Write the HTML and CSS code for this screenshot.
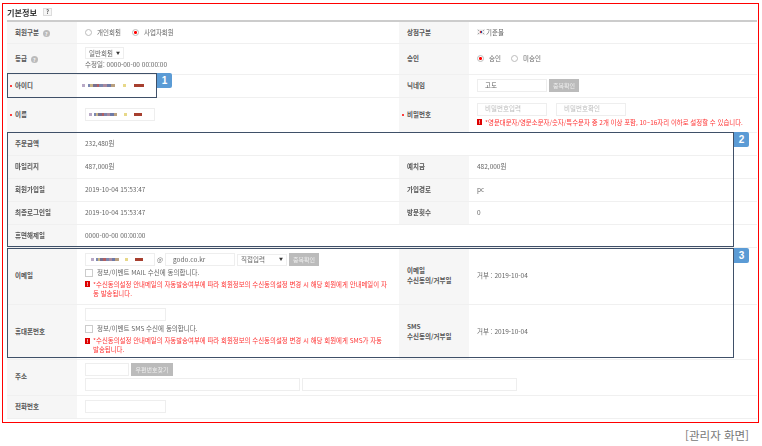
FILE: index.html
```html
<!DOCTYPE html>
<html lang="ko">
<head>
<meta charset="utf-8">
<title>기본정보</title>
<link rel="stylesheet" href="styles.css">
</head>
<body>
<main class="frame">
  <header class="title-bar"><h1 class="title">기본정보</h1><span class="help-box">?</span></header>
  <table class="form">
    <colgroup><col class="c-label"><col class="c-value"><col class="c-label"><col class="c-value2"></colgroup>
    <tr class="h22">
      <th>회원구분 <i class="q">?</i></th>
      <td><div class="line"><i class="radio"></i><span class="opt">개인회원</span><i class="radio on gap"></i><span class="opt">사업자회원</span></div></td>
      <th>상점구분</th>
      <td><div class="line"><svg class="flag" viewBox="0 0 9 7"><rect width="9" height="7" fill="#f4f4f4"/><path d="M4.5 2a1.5 1.5 0 0 1 0 3z" fill="#2a4a9a"/><path d="M4.5 2a1.5 1.5 0 0 0 0 3z" fill="#d8232a"/><path d="M1 1l1 1M1 6l1-1M8 1L7 2M8 6L7 5" stroke="#333" stroke-width=".8"/></svg><span class="val">기준몰</span></div></td>
    </tr>
    <tr class="h31">
      <th>등급 <i class="q">?</i></th>
      <td><div class="stack"><span class="select s-grade">일반회원<b class="caret">▼</b></span><span class="val">수정일: 0000-00-00 00:00:00</span></div></td>
      <th>승인</th>
      <td><div class="line"><i class="radio on"></i><span class="opt">승인</span><i class="radio gap2"></i><span class="opt">미승인</span></div></td>
    </tr>
    <tr class="h23">
      <th class="req">아이디</th>
      <td><span class="mosaic m-id"></span></td>
      <th>닉네임</th>
      <td><div class="line"><span class="input w70 txt">고도</span><span class="btn w30">중복확인</span></div></td>
    </tr>
    <tr class="h35">
      <th class="req">이름</th>
      <td><span class="input w70 boxed"><span class="mosaic m-name"></span></span></td>
      <th class="req">비밀번호</th>
      <td><div class="stack s5"><div class="line"><span class="input w70 ph">비밀번호입력</span><span class="input w70 ph gap3">비밀번호확인</span></div><p class="note"><i class="bang">!</i>*영문대문자/영문소문자/숫자/특수문자 중 2개 이상 포함, 10~16자리 이하로 설정할 수 있습니다.</p></div></td>
    </tr>
    <tr class="h23"><th>주문금액</th><td colspan="3" class="val">232,480원</td></tr>
    <tr class="h23"><th>마일리지</th><td class="val">487,000원</td><th>예치금</th><td class="val">482,000원</td></tr>
    <tr class="h23"><th>회원가입일</th><td class="val">2019-10-04 15:53:47</td><th>가입경로</th><td class="val">pc</td></tr>
    <tr class="h23"><th>최종로그인일</th><td class="val">2019-10-04 15:53:47</td><th>방문횟수</th><td class="val">0</td></tr>
    <tr class="h23"><th>휴면해제일</th><td colspan="3" class="val">0000-00-00 00:00:00</td></tr>
    <tr class="h57">
      <th>이메일</th>
      <td><div class="stack s5">
        <div class="line"><span class="input w70 boxed"><span class="mosaic m-mail"></span></span><span class="at">@</span><span class="input w70 txt">godo.co.kr</span><span class="select s-mail">직접입력<b class="caret">▼</b></span><span class="btn w30">중복확인</span></div>
        <label class="check"><i class="box"></i>정보/이벤트 MAIL 수신에 동의합니다.</label>
        <p class="note"><i class="bang">!</i>*수신동의설정 안내메일의 자동발송여부에 따라 회원정보의 수신동의설정 변경 시 해당 회원에게 안내메일이 자<br>동 발송됩니다.</p>
      </div></td>
      <th>이메일<br>수신동의/거부일</th>
      <td class="val">거부 : 2019-10-04</td>
    </tr>
    <tr class="h55">
      <th>휴대폰번호</th>
      <td><div class="stack s3">
        <span class="input w80"></span>
        <label class="check"><i class="box"></i>정보/이벤트 SMS 수신에 동의합니다.</label>
        <p class="note note-up"><i class="bang">!</i>*수신동의설정 안내메일의 자동발송여부에 따라 회원정보의 수신동의설정 변경 시 해당 회원에게 SMS가 자동<br>발송됩니다.</p>
      </div></td>
      <th>SMS<br>수신동의/거부일</th>
      <td class="val">거부 : 2019-10-04</td>
    </tr>
    <tr class="h36">
      <th>주소</th>
      <td colspan="3"><div class="stack s2">
        <div class="line"><span class="input w43"></span><span class="btn w41">우편번호찾기</span></div>
        <div class="line"><span class="input w214"></span><span class="input w215"></span></div>
      </div></td>
    </tr>
    <tr class="h23"><th>전화번호</th><td colspan="3"><span class="input w80"></span></td></tr>
  </table>

  <div class="mark mark-1"></div><span class="badge badge-1">1</span>
  <div class="mark mark-2"></div><span class="badge badge-2">2</span>
  <div class="mark mark-3"></div><span class="badge badge-3">3</span>
</main>
<p class="caption">[관리자 화면]</p>
</body>
</html>
```
FILE: styles.css
```css
* { box-sizing: border-box; }
html, body { margin: 0; padding: 0; background: #fff; }
body {
  width: 762px;
  height: 446px;
  overflow: hidden;
  font-family: "Noto Sans CJK KR", "Noto Sans", sans-serif;
  font-size: 6.5px;
  color: #555;
}
.frame {
  position: relative;
  width: 757px;
  height: 420px;
  margin: 3px 0 0 2px;
  padding: 0 1px 0 4px;
  border: 1px solid #f00;
}
.title-bar { display: flex; align-items: center; gap: 6px; height: 16px; filter: blur(.25px); }
.title { margin: 0; font-size: 8.2px; font-weight: 700; color: #333; line-height: 12px; }
.help-box {
  width: 9px; height: 8px; border: 1px solid #ddd; background: #f6f6f6;
  font-size: 6px; line-height: 6px; font-weight: 700; text-align: center; color: #555;
}
.form {
  width: 750px;
  table-layout: fixed;
  border-collapse: collapse;
  border-top: 2px solid #ccc;
  filter: blur(.25px);
}
.c-label { width: 70px; }
.c-value { width: 322px; }
.c-value2 { width: 288px; }
.form tr { border-bottom: 1px solid #f0f0f0; }
.h22 { height: 22px; } .h23 { height: 23px; } .h31 { height: 31px; }
.h35 { height: 35px; } .h36 { height: 36px; } .h55 { height: 55px; } .h57 { height: 57px; }
.form th, .form td { padding: 0; vertical-align: middle; text-align: left; line-height: 9.5px; }
.form th {
  position: relative;
  padding-left: 8px;
  background: #f6f6f6;
  font-weight: 700;
  color: #555;
}
.form td { padding-left: 8px; }
.val { color: #666; }
.req::before {
  content: "";
  position: absolute;
  left: 3px; top: 50%;
  width: 2px; height: 2px;
  margin-top: -1px;
  border-radius: 50%;
  background: #f00;
}
.line { display: flex; align-items: center; }
.stack { display: flex; flex-direction: column; align-items: flex-start; gap: 1px; }
.s2 { gap: 2px; }
.s3 { gap: 3px; padding-bottom: 1px; }
.s5 { gap: 2px; }
.note-up { margin-top: -1px; }
.q {
  display: inline-block; width: 7px; height: 7px; margin-left: 2px; border-radius: 50%;
  background: #bbb; color: #fff; font-size: 5px; line-height: 7px; text-align: center; font-style: normal; vertical-align: -1px;
}
.radio {
  width: 7px; height: 7px; border: 1px solid #bbb; border-radius: 50%; background: #fff;
  margin-right: 5px; flex: none;
}
.radio.on { background: radial-gradient(circle, #f00 0 1.2px, #fff 1.8px); }
.gap { margin-left: 11px; }
.gap2 { margin-left: 10px; }
.opt { color: #666; }
.flag { width: 8px; height: 6px; margin-right: 1px; }
.input {
  display: flex; align-items: center;
  height: 13px; border: 1px solid #eee; background: #fff; flex: none;
}
.w43 { width: 44px; } .w70 { width: 70px; } .w80 { width: 81px; }
.w214 { width: 215px; } .w215 { width: 215px; margin-left: 2px; }
.txt { padding-left: 7px; color: #666; }
.ph { padding-left: 7px; color: #bbb; }
.boxed { padding-left: 2px; }
.gap3 { margin-left: 9px; }
.btn {
  display: flex; align-items: center; justify-content: center;
  height: 13px; margin-left: 2px; background: #bbb; color: #eee; font-size: 6px; flex: none;
}
.w30 { width: 30px; } .w41 { width: 42px; }
.select {
  display: flex; align-items: center; justify-content: space-between;
  height: 12px; padding: 0 3px; border: 1px solid #eee; background: #fff; color: #666;
}
.s-grade { width: 39px; }
.s-mail { width: 50px; margin-left: 2px; }
.caret { font-size: 4px; color: #333; font-weight: 400; }
.at { width: 10px; text-align: center; color: #777; }
.check { display: flex; align-items: center; color: #666; }
.box { width: 8px; height: 8px; border: 1px solid #ccc; background: #fff; margin-right: 4px; flex: none; }
.note {
  position: relative;
  margin: 0; padding-left: 8px;
  font-size: 6.42px; line-height: 9px; color: #f33; white-space: nowrap;
}
.bang {
  position: absolute; left: 0; top: 1.5px;
  width: 5px; height: 6px; background: #d00; color: #fff;
  font-size: 5px; line-height: 6px; font-weight: 700; text-align: center; font-style: normal;
}
.mosaic {
  display: block; height: 3px;
  background: linear-gradient(90deg, #b9a9c6 0 5%, #fff 5% 9%, #7b88b0 9% 13%, #c9b486 13% 17%, #76708f 17% 24%, #b25f63 24% 28%, #7c86ad 28% 34%, #a98a9e 34% 40%, #6e7aa6 40% 47%, #b9a07f 47% 53%, #fff 53% 66%, #e7d889 66% 71%, #fff 71% 84%, #a73f2f 84% 100%);
}
.m-id { width: 62px; margin-left: -3px; }
.m-name { width: 53px; margin-left: 1px; }
.m-mail { width: 52px; margin-left: 3px; }
.mark { position: absolute; border: 1px solid #3f5068; left: 4px; pointer-events: none; }
.mark-1 { top: 69px; width: 150px; height: 25px; }
.mark-2 { top: 128px; width: 727px; height: 115px; }
.mark-3 { top: 244px; width: 727px; height: 110px; }
.badge {
  position: absolute; width: 15px; height: 15px;
  background: #5b9bd5; color: #fff; border-radius: 0 2px 2px 0;
  font: 700 10px/15px "Liberation Sans", sans-serif; text-align: center;
}
.badge-1 { left: 154px; top: 69px; }
.badge-2 { left: 731px; top: 128px; }
.badge-3 { left: 731px; top: 244px; }
.caption {
  margin: 5px 0 0; padding-right: 13px;
  text-align: right; font-size: 11.5px; line-height: 14px; color: #777;
}
```
